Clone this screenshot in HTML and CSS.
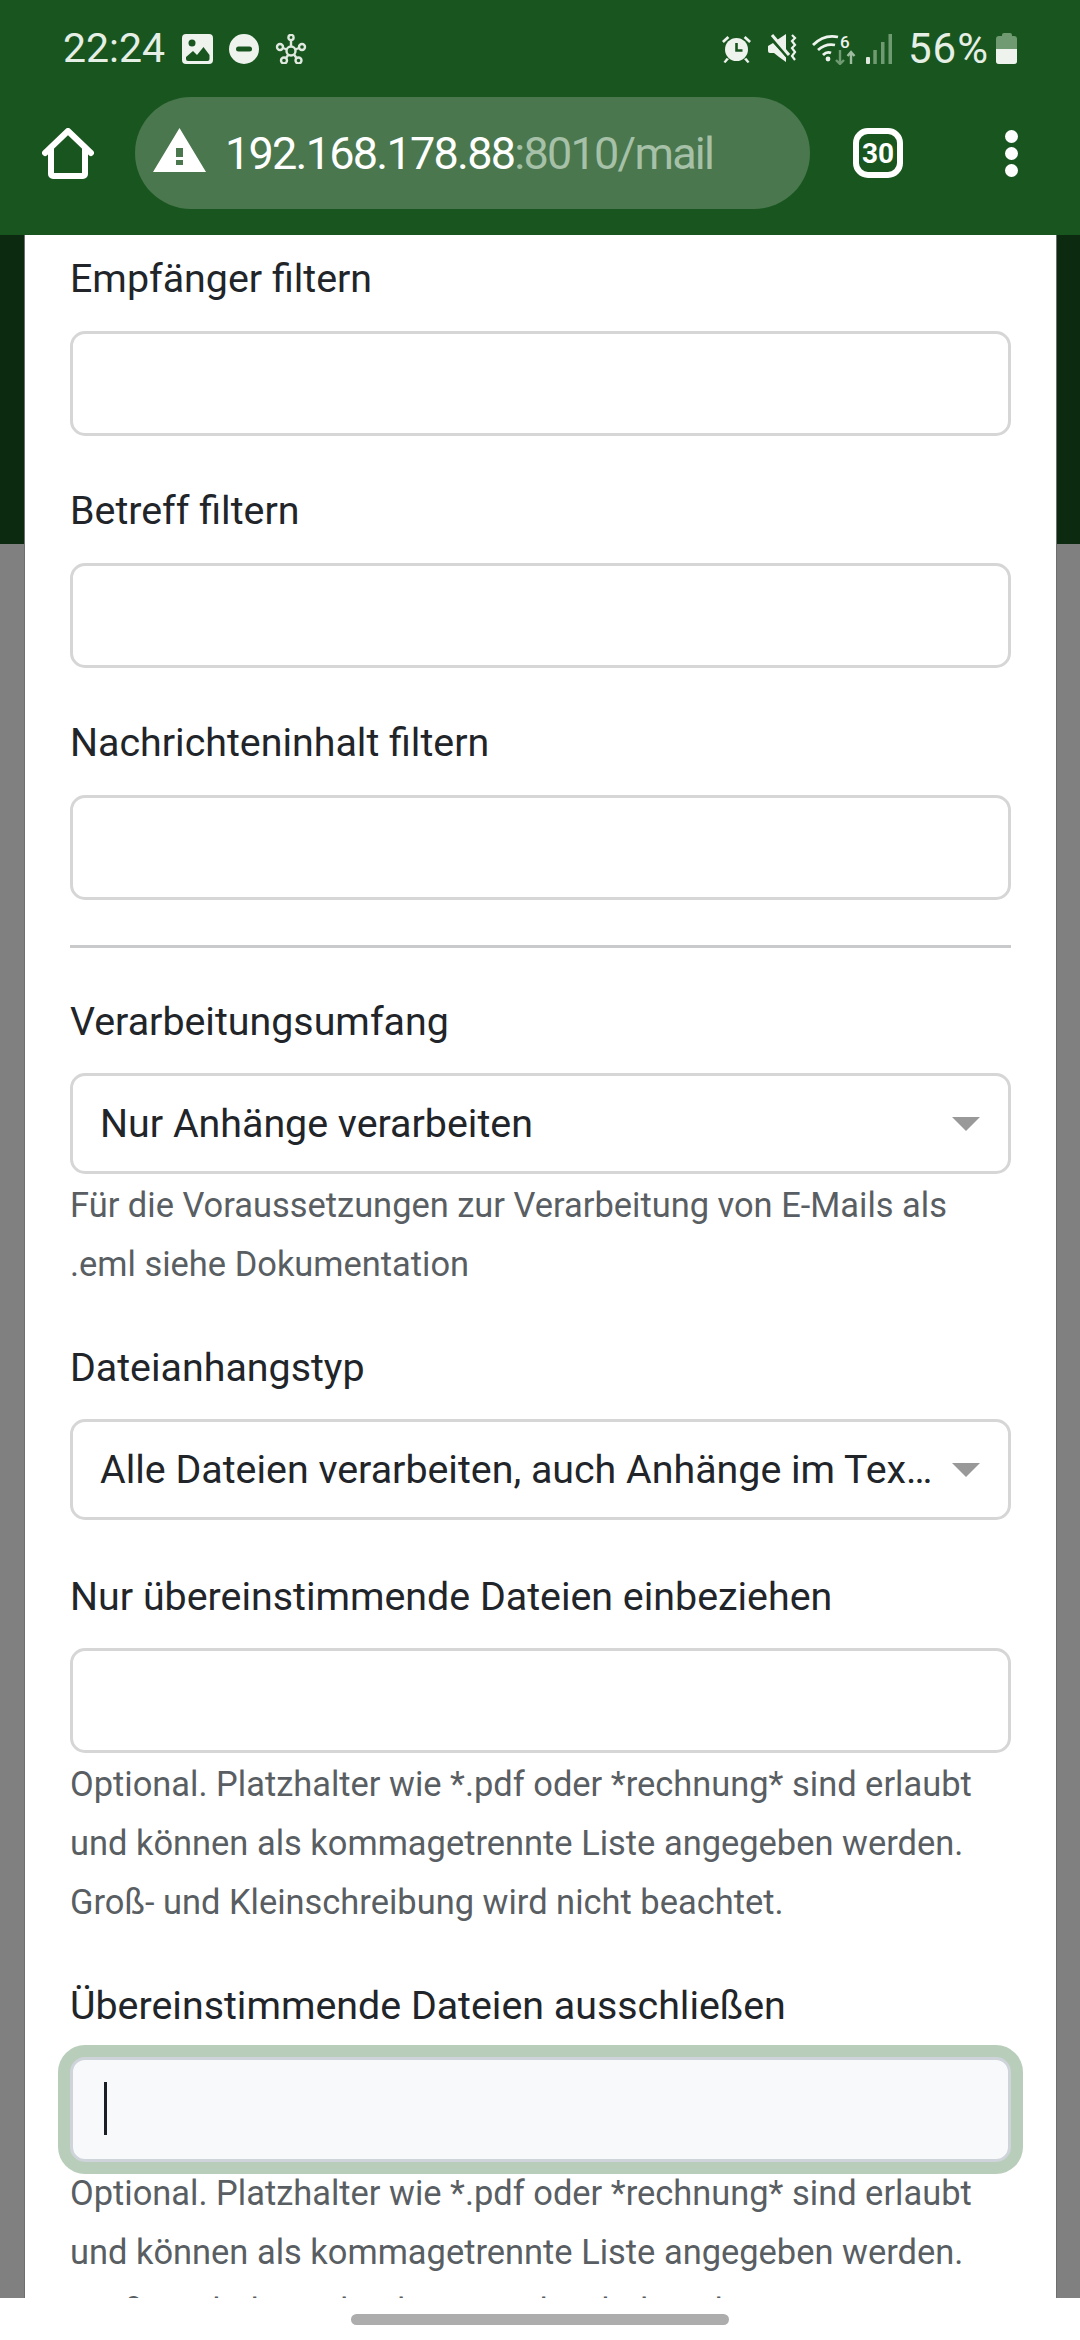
FILE: index.html
```html
<!DOCTYPE html>
<html lang="de">
<head>
<meta charset="utf-8">
<title>Mail</title>
<link rel="stylesheet" href="styles.css">
</head>
<body>
<div class="screen">
  <header class="chrome">
    <div class="status">
      <div class="status-group">
        <span class="clock">22:24</span>
        <svg class="si si-img" viewBox="0 0 31 30"><path fill="#eef3ee" fill-rule="evenodd" d="M4 0h23a4 4 0 0 1 4 4v22a4 4 0 0 1-4 4H4a4 4 0 0 1-4-4V4a4 4 0 0 1 4-4zM4 23v2a2 2 0 0 0 2 2h19.500a2 2 0 0 0 2-2v-4L21.500 13 15 21l-4-4z"/><circle cx="10" cy="9" r="3.500" fill="#19561f"/></svg>
        <svg class="si si-dnd" viewBox="0 0 30 30"><circle cx="15" cy="15" r="15" fill="#eef3ee"/><rect x="7" y="12.500" width="16" height="5" rx="2.500" fill="#19561f"/></svg>
        <svg class="si si-hub" viewBox="0 0 33 30" fill="none" stroke="#dfe9df" stroke-width="2.400"><circle cx="16" cy="17" r="4.500"/><circle cx="16" cy="3.500" r="2.600"/><circle cx="5" cy="13" r="3"/><circle cx="27" cy="13" r="3"/><circle cx="9" cy="26.500" r="3"/><circle cx="23.500" cy="26.500" r="3"/><path d="M16 6v6.500M8 14l3.800 1.500M24 14l-3.800 1.500M11 24l2.500-3.500M21.500 24l-2.500-3.500"/></svg>
      </div>
      <div class="status-group">
        <svg class="si si-alarm" viewBox="0 0 29 28"><path fill="#eef3ee" d="M0 6l5.500-5 1.800 2-5.500 5zM29 6l-5.500-5-1.800 2 5.500 5zM4.500 23 1.500 27l2 1 3.500-4zM24.500 23l3 4-2 1-3.500-4z"/><circle cx="14.500" cy="14.500" r="11.500" fill="#eef3ee"/><path d="M14.500 8v7.500h6" fill="none" stroke="#19561f" stroke-width="2.600"/></svg>
        <svg class="si si-mute" viewBox="0 0 30 29"><path fill="#eef3ee" d="M1 12l5-3 13 14 0 5-7-5-5-4H3a2 2 0 0 1-2-2zM10 6l9-6v17z"/><path d="M3 3l17 20" stroke="#19561f" stroke-width="2"/><path d="M5 1l17 20" stroke="#eef3ee" stroke-width="3"/><path d="M25 1l3 3-3 3 3 4-3 3 3 4-3 4 3 4" fill="none" stroke="#eef3ee" stroke-width="2.200"/></svg>
        <svg class="si si-wifi" viewBox="0 0 44 32" fill="none"><path d="M1 12Q12 1 26 4M6 17q8-7 17-5M11 22q4-4 8-2" stroke="#eef3ee" stroke-width="2.800"/><circle cx="16" cy="26" r="2.400" fill="#eef3ee"/><text x="28" y="15" class="wifi-six">6</text><path d="M28 17v14M24 27l4 4 4-4" stroke="#6f9a72" stroke-width="2.400"/><path d="M39 31V19M35.500 23l3.500-4 3.500 4" stroke="#9fbea1" stroke-width="2.400"/></svg>
        <svg class="si si-signal" viewBox="0 0 26 30"><rect x="0" y="23" width="4" height="7" rx="1" fill="#dfe9df"/><rect x="7.300" y="16" width="3.500" height="14" fill="#6f9a72"/><rect x="15" y="8" width="3.500" height="22" fill="#6f9a72"/><rect x="22.500" y="0" width="3.500" height="30" fill="#6f9a72"/></svg>
        <span class="battery-pct">56%</span>
        <span class="battery"><span class="battery-cap"></span><span class="battery-body"><span class="battery-fill"></span></span></span>
      </div>
    </div>
    <div class="toolbar">
      <svg class="home" viewBox="0 0 52 51" fill="none" stroke="#fff" stroke-width="6" stroke-linejoin="round" stroke-linecap="round"><path d="M3 25 26 3l23 22M9 21v25a2 2 0 0 0 2 2h30a2 2 0 0 0 2-2V21"/></svg>
      <div class="omnibox">
        <svg class="warn" viewBox="0 0 53 44"><path fill="#fff" fill-rule="evenodd" d="M26.500 0 53 44H0zM23 20v9h7v-9zM23 32v5h7v-5z"/></svg>
        <span class="url">192.168.178.88<span class="url-dim">:8010/mail</span></span>
      </div>
      <span class="tabs">30</span>
      <span class="menu"><i></i><i></i><i></i></span>
    </div>
  </header>

  <main class="page">
    <form class="modal">
      <div class="field">
        <label class="label">Empfänger filtern</label>
        <div class="input"></div>
      </div>
      <div class="field">
        <label class="label">Betreff filtern</label>
        <div class="input"></div>
      </div>
      <div class="field">
        <label class="label">Nachrichteninhalt filtern</label>
        <div class="input"></div>
      </div>
      <hr class="rule">
      <div class="field">
        <label class="label">Verarbeitungsumfang</label>
        <div class="select"><span class="select-text">Nur Anhänge verarbeiten</span><span class="caret-down"></span></div>
        <p class="help">Für die Voraussetzungen zur Verarbeitung von E-Mails als<br>.eml siehe Dokumentation</p>
      </div>
      <div class="field">
        <label class="label">Dateianhangstyp</label>
        <div class="select"><span class="select-text">Alle Dateien verarbeiten, auch Anhänge im Textkörper</span><span class="caret-down"></span></div>
      </div>
      <div class="field">
        <label class="label">Nur übereinstimmende Dateien einbeziehen</label>
        <div class="input"></div>
        <p class="help">Optional. Platzhalter wie *.pdf oder *rechnung* sind erlaubt<br>und können als kommagetrennte Liste angegeben werden.<br>Groß- und Kleinschreibung wird nicht beachtet.</p>
      </div>
      <div class="field">
        <label class="label">Übereinstimmende Dateien ausschließen</label>
        <div class="input input-focus"><span class="text-caret"></span></div>
        <p class="help">Optional. Platzhalter wie *.pdf oder *rechnung* sind erlaubt<br>und können als kommagetrennte Liste angegeben werden.<br>Groß- und Kleinschreibung wird nicht beachtet.</p>
      </div>
    </form>
  </main>
  <footer class="navbar"><span class="pill"></span></footer>
</div>
</body>
</html>
```
FILE: styles.css
```css
* { box-sizing: border-box; }
html, body { margin: 0; padding: 0; }
body { background: #fff; font-family: Roboto, "Noto Sans", sans-serif; }
.screen { width: 1080px; height: 2340px; overflow: hidden; display: flex; flex-direction: column; background: #fff; }

.chrome { height: 235px; flex: none; background: #19561f; color: #fff; }
.status { height: 97px; padding: 0 63px; display: flex; justify-content: space-between; align-items: center; }
.status-group { display: flex; align-items: center; }
.clock, .battery-pct { color: #e6efe6; line-height: 1; }
.clock { font-size: 41px; width: 103px; }
.si { display: block; flex: none; }
.si-img { width: 31px; height: 30px; margin-left: 16px; }
.si-dnd { width: 30px; height: 30px; margin-left: 16px; }
.si-hub { width: 33px; height: 30px; margin-left: 16px; }
.si-alarm { width: 29px; height: 28px; }
.si-mute { width: 30px; height: 29px; margin-left: 16px; }
.si-wifi { width: 44px; height: 32px; margin-left: 15px; }
.wifi-six { font: 500 17px Roboto, sans-serif; fill: #eef3ee; }
.si-signal { width: 26px; height: 30px; margin-left: 10px; }
.battery-pct { font-size: 42px; margin-left: 16px; letter-spacing: 1px; width: 88px; }
.battery { width: 21px; height: 31px; display: flex; flex-direction: column; align-items: center; }
.battery-cap { width: 10px; height: 3px; background: #6f9a72; border-radius: 2px 2px 0 0; }
.battery-body { width: 21px; flex: 1; background: #6f9a72; border-radius: 3px; display: flex; align-items: flex-end; overflow: hidden; }
.battery-fill { width: 100%; height: 52%; background: #eef3ee; }

.toolbar { height: 112px; display: flex; align-items: center; padding-left: 42px; }
.home { width: 52px; height: 51px; flex: none; margin-top: 1px; }
.omnibox { width: 675px; height: 112px; margin-left: 41px; background: #4a774e; border-radius: 56px; display: flex; align-items: center; padding-left: 18px; flex: none; }
.warn { width: 53px; height: 44px; flex: none; margin-top: -6px; }
.url { margin-left: 19px; font-size: 45px; line-height: 1; letter-spacing: -1.750px; color: #fff; white-space: nowrap; }
.url-dim { color: #a6c1a8; }
.tabs { width: 50px; height: 50px; margin-left: 43px; flex: none; border: 6px solid #fff; border-radius: 15px; display: flex; align-items: center; justify-content: center; font-size: 28px; font-weight: 700; }
.menu { margin-left: 102px; display: flex; flex-direction: column; gap: 4px; flex: none; }
.menu i { display: block; width: 13px; height: 13px; border-radius: 50%; background: #fff; }

.page { height: 2063px; flex: none; overflow: hidden; background: linear-gradient(#0b2a0f 0 309px, #808080 309px); padding: 0 23px 0 24px; }
.modal { background: #fff; border-left: 1px solid #6e6e6e; border-right: 1px solid #6e6e6e; padding: 14px 45px 0; color: #212529; }
.field { display: flow-root; margin-bottom: 45px; }
.label { display: block; font-size: 39.375px; line-height: 59px; margin-bottom: 23px; }
.rule ~ .field .label { margin-bottom: 22px; }
.input { height: 105px; background: #fff; border: 3px solid #d6d6d6; border-radius: 15px; }
.input-focus { background: #f8f9fb; border-color: #ced4da; box-shadow: 0 0 0 12px #b9cdbb; padding: 22px 0 0 31px; }
.text-caret { display: block; width: 3px; height: 53px; background: #1b1f26; }
.rule { border: 0; border-top: 3px solid #c9cacb; margin: 0 0 44px; }
.select { height: 101px; border: 3px solid #d6d6d6; border-radius: 15px; display: flex; align-items: center; padding: 0 28px 0 27px; font-size: 39.375px; }
.select:last-child { margin-bottom: 2px; }
.select-text { flex: 1; min-width: 0; overflow: hidden; white-space: nowrap; text-overflow: ellipsis; padding-right: 10px; }
.caret-down { flex: none; width: 0; height: 0; border-left: 14px solid transparent; border-right: 14px solid transparent; border-top: 14px solid #999; }
.help { margin: 2px 0 -1px; font-size: 34.450px; line-height: 59px; color: #595e63; }

.navbar { flex: 1; background: #fff; display: flex; justify-content: center; align-items: flex-start; padding-top: 16px; }
.pill { width: 378px; height: 11px; border-radius: 6px; background: #adadad; }
```
